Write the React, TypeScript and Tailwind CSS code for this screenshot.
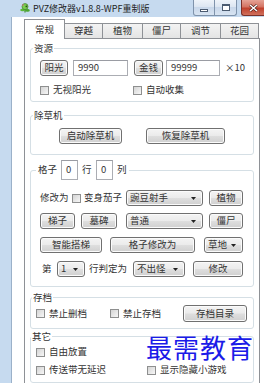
import React from "react";

const btnBase =
  "flex items-center rounded-[3px] border border-[#707070] bg-[linear-gradient(#f4f4f4,#ebebeb_48%,#dedede_52%,#d0d0d0)] shadow-[inset_0_0_0_1px_#fbfbfb]";

function Btn({ cls, children }: { cls: string; children: React.ReactNode }) {
  return <div className={`${btnBase} justify-center ${cls}`}>{children}</div>;
}

function Combo({ cls, children }: { cls: string; children: React.ReactNode }) {
  return (
    <div className={`${btnBase} justify-between pl-[3px] pr-[6px] ${cls}`}>
      <span>{children}</span>
      <svg width="5" height="3" viewBox="0 0 5 3">
        <path d="M0 0h5L2.5 3z" fill="#222" />
      </svg>
    </div>
  );
}

function TextBox({ cls, children }: { cls: string; children: React.ReactNode }) {
  return (
    <div className={`flex items-center border border-[#abadb3] border-t-[#9a9ca3] bg-white pl-[4px] ${cls}`}>
      {children}
    </div>
  );
}

function Box() {
  return <div className="h-[9px] w-[9px] shrink-0 border border-[#8e8f8f] bg-[linear-gradient(135deg,#d4d4d4,#f7f7f7)]" />;
}

function Check({ label, cls = "" }: { label: string; cls?: string }) {
  return (
    <div className={`flex items-center ${cls}`}>
      <Box />
      <span className="ml-[4px]">{label}</span>
    </div>
  );
}

function Group({
  legend,
  legendCls = "ml-[2px] px-[1px] leading-[12px]",
  cls = "",
  children,
}: {
  legend: React.ReactNode;
  legendCls?: string;
  cls?: string;
  children: React.ReactNode;
}) {
  return (
    <fieldset className={`rounded-[3px] border border-[#d5dfe5] ${cls}`}>
      <legend className={legendCls}>{legend}</legend>
      {children}
    </fieldset>
  );
}

function TitleBar() {
  return (
    <div className="flex h-[17px]">
      <svg className="ml-[20px] mt-[3px]" width="10" height="10" viewBox="0 0 10 10">
        <path d="M5 9.5V5" stroke="#3c8a2e" strokeWidth="1.2" />
        <ellipse cx="2.6" cy="7" rx="2.4" ry="1.3" fill="#5cb83a" />
        <ellipse cx="7.4" cy="7.4" rx="2.4" ry="1.3" fill="#4aa52f" />
        <circle cx="5" cy="3.6" r="3" fill="#7bd04f" stroke="#3d7d28" strokeWidth="0.7" />
        <circle cx="6.4" cy="3.4" r="0.9" fill="#2d4d1e" />
        <circle cx="3" cy="2" r="0.8" fill="#e46a8c" />
      </svg>
      <span className="ml-[3px] mt-[4px] text-[9px] leading-[10px] text-[#1e1e1e]">
        PVZ修改器v1.8.8-WPF重制版
      </span>
      <div className="ml-auto flex">
        <div className="flex h-[16px] w-[22px] items-end justify-center rounded-bl-[3px] border border-t-0 border-[#7f93ab] bg-[linear-gradient(#eef3f9,#dbe5f1_50%,#c9d8ea_50%,#d8e4f2)] pb-[3px]">
          <div className="h-[3px] w-[8px] border border-[#4b5b70] bg-white" />
        </div>
        <div className="-ml-px flex h-[16px] w-[23px] items-center justify-center rounded-br-[3px] border border-t-0 border-[#7f93ab] bg-[linear-gradient(#eef3f9,#dbe5f1_50%,#c9d8ea_50%,#d8e4f2)]">
          <div className="h-[7px] w-[8px] border border-t-2 border-[#4b5b70] bg-white" />
        </div>
        <div className="ml-[4px] flex h-[16px] w-[23px] items-center justify-center rounded-bl-[3px] border border-r-0 border-t-0 border-[#7b3129] bg-[linear-gradient(#e5a396,#d47463_45%,#c0412d_55%,#d0705c)]">
          <svg width="9" height="8" viewBox="0 0 9 8">
            <path d="M1 1l7 6M8 1L1 7" stroke="#3d1410" strokeWidth="2.6" />
            <path d="M1 1l7 6M8 1L1 7" stroke="#fff" strokeWidth="1.6" />
          </svg>
        </div>
      </div>
    </div>
  );
}

function Tabs() {
  const tabCls =
    "-ml-px flex h-[15px] items-center justify-center border border-b-0 border-[#8e9196] bg-[linear-gradient(#f3f3f3,#e4e4e4)]";
  return (
    <div className="flex h-[19px] items-end">
      <div className="relative z-10 -mb-px flex h-[20px] w-[41px] items-center justify-center border border-b-0 border-[#8e9196] bg-white">
        常规
      </div>
      <div className={`${tabCls} w-[39px]`}>穿越</div>
      <div className={`${tabCls} w-[41px]`}>植物</div>
      <div className={`${tabCls} w-[39px]`}>僵尸</div>
      <div className={`${tabCls} w-[41px]`}>调节</div>
      <div className={`${tabCls} w-[39px]`}>花园</div>
    </div>
  );
}

export default function App() {
  return (
    <div className="relative h-[383px] w-[264px] overflow-hidden bg-[#c6daef] font-['Noto_Sans_CJK_SC','Noto_Sans',sans-serif] text-[9.5px] leading-none text-[#333]">
      <TitleBar />
      <div className="flex h-[366px]">
        <div className="w-[12px] shrink-0 border-r border-[#9bb1c9]" />
        <div className="flex-1 bg-white pl-[12px] pt-[2px]">
          <Tabs />
          <div className="h-[360px] w-[236px] border border-[#8e9196] bg-white px-[5px] pt-[3px]">
            <Group legend="资源">
              <div className="pb-[5px] pl-[9px] pt-[6px]">
                <div className="flex h-[16px] items-center">
                  <Btn cls="h-[16px] w-[28px]">阳光</Btn>
                  <TextBox cls="ml-[5px] h-[16px] w-[55px]">9990</TextBox>
                  <Btn cls="ml-[6px] h-[16px] w-[29px]">金钱</Btn>
                  <TextBox cls="ml-[3px] h-[16px] w-[54px]">99999</TextBox>
                  <span className="ml-[5px]">×10</span>
                </div>
                <div className="mt-[8px] flex h-[12px] items-center">
                  <Check label="无视阳光" cls="w-[93px]" />
                  <Check label="自动收集" />
                </div>
              </div>
            </Group>

            <Group legend="除草机" cls="mt-[7px]">
              <div className="flex pb-[10px] pl-[28px] pt-[7px]">
                <Btn cls="h-[16px] w-[63px]">启动除草机</Btn>
                <Btn cls="ml-[24px] h-[16px] w-[79px]">恢复除草机</Btn>
              </div>
            </Group>

            <Group
              cls="mt-[5px]"
              legendCls="ml-[5px] px-[2px]"
              legend={
                <div className="flex h-[20px] items-center">
                  <span className="w-[23px]">格子</span>
                  <TextBox cls="h-[20px] w-[17px]">0</TextBox>
                  <span className="ml-[4px] w-[14px]">行</span>
                  <TextBox cls="h-[20px] w-[17px]">0</TextBox>
                  <span className="ml-[4px]">列</span>
                </div>
              }
            >
              <div className="pb-[9px] pl-[9px] pt-[10px]">
                <div className="flex h-[16px] items-center">
                  <span className="w-[32px]">修改为</span>
                  <Box />
                  <span className="ml-[3px] w-[42px]">变身茄子</span>
                  <Combo cls="h-[16px] w-[77px]">豌豆射手</Combo>
                  <Btn cls="ml-[6px] h-[16px] w-[34px]">植物</Btn>
                </div>
                <div className="mt-[7px] flex h-[16px] items-center">
                  <Btn cls="h-[16px] w-[35px]">梯子</Btn>
                  <Btn cls="ml-[6px] h-[16px] w-[36px]">墓碑</Btn>
                  <Combo cls="ml-[9px] h-[16px] w-[77px]">普通</Combo>
                  <Btn cls="ml-[6px] h-[16px] w-[34px]">僵尸</Btn>
                </div>
                <div className="mt-[8px] flex h-[16px] items-center">
                  <Btn cls="h-[16px] w-[62px]">智能搭梯</Btn>
                  <Btn cls="ml-[8px] h-[16px] w-[85px]">格子修改为</Btn>
                  <Combo cls="ml-[9px] h-[16px] w-[39px]">草地</Combo>
                </div>
                <div className="mt-[8px] flex h-[16px] items-center">
                  <span className="w-[17px] pl-[2px]">第</span>
                  <Combo cls="h-[16px] w-[28px]">1</Combo>
                  <span className="ml-[4px] w-[44px]">行判定为</span>
                  <Combo cls="h-[16px] w-[52px]">不出怪</Combo>
                  <Btn cls="ml-[8px] h-[16px] w-[50px]">修改</Btn>
                </div>
              </div>
            </Group>

            <Group legend="存档" legendCls="ml-[1px] px-[1px] leading-[12px]" cls="mt-[4px]">
              <div className="mb-[6px] mt-[2px] flex h-[17px] items-center pl-[5px]">
                <Check label="禁止删档" cls="w-[74px]" />
                <Check label="禁止存档" cls="w-[73px]" />
                <Btn cls="h-[17px] w-[64px]">存档目录</Btn>
              </div>
            </Group>

            <Group legend="其它" legendCls="ml-[0px] px-[1px] leading-[12px]" cls="mt-[1px]">
              <div className="pb-[6px] pl-[5px] pt-[4px]">
                <div className="flex h-[12px] items-center">
                  <Check label="自由放置" />
                </div>
                <div className="mt-[6px] flex h-[12px] items-center">
                  <Check label="传送带无延迟" cls="w-[111px]" />
                  <Check label="显示隐藏小游戏" />
                </div>
              </div>
            </Group>
          </div>
        </div>
      </div>
      <div className="absolute left-[146px] top-[335px] h-[24px] text-[26px] leading-[24px] tracking-[1px] text-[#1b1be8]">
        最需教育
      </div>
    </div>
  );
}
